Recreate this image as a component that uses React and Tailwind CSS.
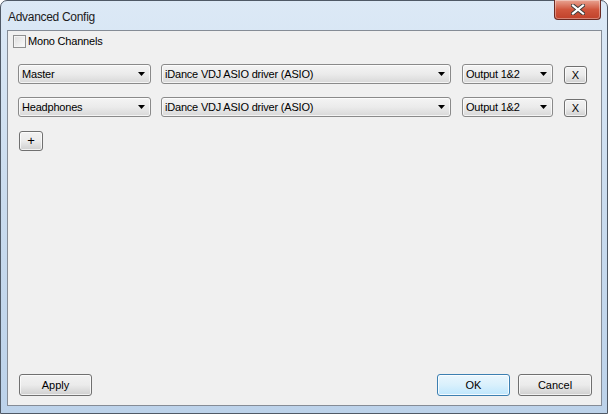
const ui = { fontFamily: '"Liberation Sans", Arial, sans-serif' }

function Combo({ label, className }) {
  return (
    <div
      className={`flex h-[20px] items-center justify-between rounded-[3px] border border-[#8a8a8a] bg-gradient-to-b from-[#f4f4f4] via-[#ebebeb] to-[#d8d8d8] pl-[3px] pr-[5px] text-[11px] tracking-[-0.2px] text-black shadow-[inset_0_0_0_1px_rgba(255,255,255,0.7)] ${className}`}
    >
      <span>{label}</span>
      <svg width="7" height="4" viewBox="0 0 7 4">
        <path d="M0 0h7L3.5 4z" fill="#000" />
      </svg>
    </div>
  )
}

function Button({ children, className, primary }) {
  return (
    <div
      className={`flex items-center justify-center rounded-[3px] border text-[11px] text-black ${
        primary
          ? 'border-[#3c7fb1] bg-gradient-to-b from-[#eaf6fd] via-[#d9f0fc] to-[#bee6fd] shadow-[inset_0_0_0_1px_rgba(255,255,255,0.8)]'
          : 'border-[#707070] bg-gradient-to-b from-[#f2f2f2] via-[#ebebeb] to-[#cfcfcf] shadow-[inset_0_0_0_1px_rgba(255,255,255,0.7)]'
      } ${className}`}
    >
      {children}
    </div>
  )
}

function DeviceRow({ channel }) {
  return (
    <div className="flex h-[20px] items-start">
      <Combo label={channel} className="ml-[10px] w-[133px]" />
      <Combo label="iDance VDJ ASIO driver (ASIO)" className="ml-[10px] w-[290px]" />
      <Combo label="Output 1&2" className="ml-[11px] w-[91px]" />
      <Button className="ml-[11px] mt-[2px] h-[18px] w-[23px]">X</Button>
    </div>
  )
}

export default function App() {
  return (
    <div className="h-[414px] w-[608px] overflow-hidden bg-white" style={ui}>
      <div className="relative flex h-full w-full flex-col rounded-t-[7px] border border-[#4f5966] bg-gradient-to-b from-[#dce9f6] via-[#c9dbee] to-[#bcd2ea] pl-[6px] pr-[5px]">
        <div className="flex h-[29px] items-center pl-[1px] pt-[2px] text-[12px] tracking-[-0.3px] text-[#1b1b1b]">
          Advanced Config
        </div>

        <div className="absolute right-[6px] top-[-1px] flex h-[20px] w-[47px] items-center justify-center rounded-b-[4px] border border-t-0 border-[#6b2a22] bg-gradient-to-b from-[#e8a493] via-[#d0563d] to-[#c0412a] shadow-[inset_0_0_0_1px_rgba(255,255,255,0.35)]">
          <svg width="14" height="11" viewBox="0 0 14 11">
            <path d="M2 1.5l10 8M12 1.5l-10 8" stroke="#3a3a3a" strokeWidth="4" strokeLinecap="square" />
            <path d="M2 1.5l10 8M12 1.5l-10 8" stroke="#fff" strokeWidth="2.2" strokeLinecap="square" />
          </svg>
        </div>

        <div className="flex flex-1 flex-col border border-[#858c96] bg-[#f0f0f0]">
          <div className="ml-[5px] mt-[4px] flex h-[13px] items-center text-[11px] tracking-[-0.2px] text-black">
            <div className="h-[13px] w-[13px] border border-[#8e8f8f] bg-gradient-to-br from-[#dcdcdc] to-[#fdfdfd] shadow-[inset_0_0_0_1px_#f4f4f4]" />
            <span className="ml-[2px]">Mono Channels</span>
          </div>

          <div className="mt-[16px] flex flex-col gap-[13px]">
            <DeviceRow channel="Master" />
            <DeviceRow channel="Headphones" />
          </div>

          <Button className="ml-[11px] mt-[14px] h-[20px] w-[24px] text-[13px]">+</Button>

          <div className="flex-1" />

          <div className="mb-[9px] flex items-center">
            <Button className="ml-[11px] h-[22px] w-[73px]">Apply</Button>
            <div className="flex-1" />
            <Button primary className="h-[22px] w-[73px]">OK</Button>
            <Button className="ml-[8px] mr-[9px] h-[22px] w-[74px]">Cancel</Button>
          </div>
        </div>

        <div className="h-[7px]" />
      </div>
    </div>
  )
}
